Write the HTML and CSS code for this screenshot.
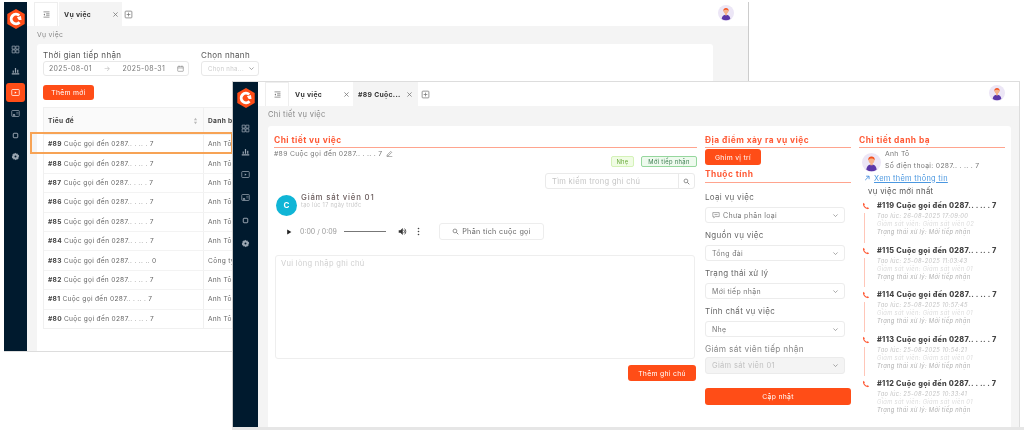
FILE: index.html
```html
<!DOCTYPE html>
<html lang="vi">
<head>
<meta charset="utf-8">
<title>Vụ việc</title>
<link rel="stylesheet" href="styles.css">
</head>
<body>
<svg class="defs" width="0" height="0" aria-hidden="true">
  <symbol id="i-logo" viewBox="0 0 24 24"><path d="M12 1l9.5 5.5v11L12 23l-9.5-5.5v-11z" fill="#ff4d17"/><path d="M15.5 8.2A5.2 5.2 0 1 0 15.8 15.6" fill="none" stroke="#fff" stroke-width="3.2"/><path d="M13 10.2l4.4-1.4.6 4.2-3 .2z" fill="#fff"/></symbol>
  <symbol id="i-dash" viewBox="0 0 12 12"><path d="M1.5 1.5h4v4h-4zM6.5 1.5h4v4h-4zM1.5 6.5h4v4h-4zM6.5 6.5h4v4h-4z" fill="none" stroke="currentColor"/></symbol>
  <symbol id="i-chart" viewBox="0 0 12 12"><path d="M1 10.5h10M3 9V6M6 9V2.5M9 9V5" fill="none" stroke="currentColor" stroke-width="1.6"/></symbol>
  <symbol id="i-case" viewBox="0 0 12 12"><rect x="1" y="2" width="10" height="8" rx="1" fill="none" stroke="currentColor"/><path d="M5 4.5L7.5 6 5 7.5z" fill="currentColor"/></symbol>
  <symbol id="i-card" viewBox="0 0 12 12"><rect x="1" y="2" width="10" height="8" rx="1" fill="none" stroke="currentColor"/><path d="M2.5 8.5c0-2 3-2 3 0zM7 4.5h3M7 6.5h3" fill="currentColor" stroke="currentColor" stroke-width=".7"/></symbol>
  <symbol id="i-square" viewBox="0 0 12 12"><rect x="3" y="3" width="6" height="6" rx="1" fill="none" stroke="currentColor" stroke-width="1.3"/></symbol>
  <symbol id="i-gear" viewBox="0 0 12 12"><path d="M6 1l1 1.3 1.6-.3.6 1.5 1.5.6-.3 1.6L11 6l-1.1 1 .3 1.6-1.5.6-.6 1.5L7 9.7 6 11l-1-1.3-1.6.3-.6-1.5-1.5-.6.3-1.6L1 6l1.1-1-.3-1.6 1.5-.6.6-1.5L5 2.3z" fill="currentColor"/><circle cx="6" cy="6" r="1.3" fill="#001a2e"/></symbol>
  <symbol id="i-menu" viewBox="0 0 12 12"><path d="M2 2.5h8M5.5 5h4.5M5.5 7h4.5M2 9.5h8" fill="none" stroke="currentColor"/><path d="M4 4.5L2 6l2 1.5z" fill="currentColor"/></symbol>
  <symbol id="i-close" viewBox="0 0 10 10"><path d="M2 2l6 6M8 2l-6 6" stroke="currentColor" stroke-width="1.1"/></symbol>
  <symbol id="i-plus" viewBox="0 0 12 12"><rect x="1.5" y="1.5" width="9" height="9" rx="1" fill="none" stroke="currentColor"/><path d="M6 3.5v5M3.5 6h5" stroke="currentColor"/></symbol>
  <symbol id="i-user" viewBox="0 0 24 24"><circle cx="12" cy="12" r="12" fill="#ece6f6"/><path d="M5.5 21c.5-5 3.5-6.500 6.500-6.500s6 1.500 6.500 6.500A12 12 0 0 1 12 23a12 12 0 0 1-6.500-2z" fill="#5b37a8"/><rect x="10.5" y="12" width="3" height="3.5" fill="#f6b48c"/><circle cx="12" cy="9.5" r="3.6" fill="#f6b48c"/><path d="M8 9.5C7.5 5.5 10 4.5 12 4.5s4.5 1 4 5c-1-2-2-2.5-4-2.5s-3 .5-4 2.5z" fill="#f4511e"/></symbol>
  <symbol id="i-cal" viewBox="0 0 10 10"><rect x="1" y="2" width="8" height="7" rx=".8" fill="none" stroke="currentColor" stroke-width=".8"/><path d="M1 4.2h8M3 1v2M7 1v2" stroke="currentColor" stroke-width=".8"/></symbol>
  <symbol id="i-chev" viewBox="0 0 10 10"><path d="M2 3.5l3 3 3-3" fill="none" stroke="currentColor" stroke-width=".9"/></symbol>
  <symbol id="i-sort" viewBox="0 0 6 10"><path d="M3 1l2 3H1zM3 9L1 6h4z" fill="currentColor"/></symbol>
  <symbol id="i-search" viewBox="0 0 10 10"><circle cx="4.2" cy="4.2" r="2.7" fill="none" stroke="currentColor" stroke-width="1.1"/><path d="M6.2 6.2L9 9" stroke="currentColor" stroke-width="1.3"/></symbol>
  <symbol id="i-pen" viewBox="0 0 10 10"><path d="M1.5 7.3L6.8 2l1.4 1.4-5.3 5.3H1.5zM1 9.5h8" fill="none" stroke="currentColor" stroke-width=".9"/></symbol>
  <symbol id="i-phone" viewBox="0 0 10 10"><path d="M2.2 1c-.8.6-1.2 1.4-1 2.4.6 2.8 2.7 4.900 5.400 5.500 1 .2 1.800-.2 2.400-1L7 6.500l-1.200.8C4.600 6.700 3.400 5.400 2.800 4.200L3.600 3z" fill="currentColor"/></symbol>
  <symbol id="i-chat" viewBox="0 0 10 10"><path d="M1 2h8v5H4L2.2 8.5V7H1z" fill="none" stroke="currentColor" stroke-width=".8"/><path d="M3 4.5h4" stroke="currentColor" stroke-width=".8"/></symbol>
  <symbol id="i-play" viewBox="0 0 10 10"><path d="M2 1l7 4-7 4z" fill="currentColor"/></symbol>
  <symbol id="i-vol" viewBox="0 0 10 10"><path d="M.8 3.5h1.900L5.300 1v8L2.700 6.500H.8z" fill="currentColor"/><path d="M6.300 3.200a2.500 2.500 0 0 1 0 3.600M7.300 1.800a4.500 4.500 0 0 1 0 6.400" fill="none" stroke="currentColor" stroke-width=".9"/></symbol>
  <symbol id="i-dots" viewBox="0 0 4 12"><circle cx="2" cy="2" r="1.1" fill="currentColor"/><circle cx="2" cy="6" r="1.1" fill="currentColor"/><circle cx="2" cy="10" r="1.1" fill="currentColor"/></symbol>
  <symbol id="i-arrow" viewBox="0 0 10 10"><path d="M2 8.5L8 2.500M3.500 2h5v5" fill="none" stroke="currentColor" stroke-width="1.3"/></symbol>
</svg>

<main class="desktop">
  <section class="window window-list">
    <nav class="sidebar">
      <svg class="logo"><use href="#i-logo"/></svg>
      <span class="nav-item"><svg><use href="#i-dash"/></svg></span>
      <span class="nav-item"><svg><use href="#i-chart"/></svg></span>
      <span class="nav-item is-active"><svg><use href="#i-case"/></svg></span>
      <span class="nav-item"><svg><use href="#i-card"/></svg></span>
      <span class="nav-item"><svg><use href="#i-square"/></svg></span>
      <span class="nav-item"><svg><use href="#i-gear"/></svg></span>
    </nav>
    <div class="pane">
      <header class="tabbar">
        <span class="tab-toggle"><svg class="ico-9"><use href="#i-menu"/></svg></span>
        <span class="tab is-current"><b>Vụ việc</b><svg class="ico-7"><use href="#i-close"/></svg></span>
        <svg class="ico-9 tab-plus"><use href="#i-plus"/></svg>
        <svg class="user"><use href="#i-user"/></svg>
      </header>
      <p class="crumb">Vụ việc</p>
      <div class="card list-card">
        <div class="filters">
          <div class="filter">
            <label>Thời gian tiếp nhận</label>
            <div class="date-input"><span>2025-08-01</span><i>→</i><span>2025-08-31</span><svg class="ico-7"><use href="#i-cal"/></svg></div>
          </div>
          <div class="filter">
            <label>Chọn nhanh</label>
            <div class="quick-select"><span>Chọn nha...</span><svg class="ico-7"><use href="#i-chev"/></svg></div>
          </div>
        </div>
        <button class="btn btn-add">Thêm mới</button>
        <div class="table">
          <div class="row row-head"><div class="cell cell-title"><b>Tiêu đề</b><svg class="sort"><use href="#i-sort"/></svg></div><div class="cell"><b>Danh bạ</b></div></div>
          <div class="row"><div class="cell cell-title"><b>#89</b> Cuộc gọi đến 0287.. . .. . 7</div><div class="cell">Anh Tô</div></div>
          <div class="row"><div class="cell cell-title"><b>#88</b> Cuộc gọi đến 0287.. . .. . 7</div><div class="cell">Anh Tô</div></div>
          <div class="row"><div class="cell cell-title"><b>#87</b> Cuộc gọi đến 0287.. . .. . 7</div><div class="cell">Anh Tô</div></div>
          <div class="row"><div class="cell cell-title"><b>#86</b> Cuộc gọi đến 0287.. . .. . 7</div><div class="cell">Anh Tô</div></div>
          <div class="row"><div class="cell cell-title"><b>#85</b> Cuộc gọi đến 0287.. . .. . 7</div><div class="cell">Anh Tô</div></div>
          <div class="row"><div class="cell cell-title"><b>#84</b> Cuộc gọi đến 0287.. . .. . 7</div><div class="cell">Anh Tô</div></div>
          <div class="row"><div class="cell cell-title"><b>#83</b> Cuộc gọi đến 0287.. . .. .. 0</div><div class="cell">Công ty</div></div>
          <div class="row"><div class="cell cell-title"><b>#82</b> Cuộc gọi đến 0287.. . .. . 7</div><div class="cell">Anh Tô</div></div>
          <div class="row"><div class="cell cell-title"><b>#81</b> Cuộc gọi đến 0287.. . .. . 7</div><div class="cell">Anh Tô</div></div>
          <div class="row"><div class="cell cell-title"><b>#80</b> Cuộc gọi đến 0287.. . .. . 7</div><div class="cell">Anh Tô</div></div>
        </div>
      </div>
    </div>
  </section>

  <div class="highlight"></div>

  <section class="window window-detail">
    <nav class="sidebar">
      <svg class="logo"><use href="#i-logo"/></svg>
      <span class="nav-item"><svg><use href="#i-dash"/></svg></span>
      <span class="nav-item"><svg><use href="#i-chart"/></svg></span>
      <span class="nav-item"><svg><use href="#i-case"/></svg></span>
      <span class="nav-item"><svg><use href="#i-card"/></svg></span>
      <span class="nav-item"><svg><use href="#i-square"/></svg></span>
      <span class="nav-item"><svg><use href="#i-gear"/></svg></span>
    </nav>
    <div class="pane">
      <header class="tabbar">
        <span class="tab-toggle"><svg class="ico-9"><use href="#i-menu"/></svg></span>
        <span class="tab tab-plain"><b>Vụ việc</b><svg class="ico-7"><use href="#i-close"/></svg></span>
        <span class="tab tab-second is-current"><b>#89 Cuộc...</b><svg class="ico-7"><use href="#i-close"/></svg></span>
        <svg class="ico-9 tab-plus"><use href="#i-plus"/></svg>
        <svg class="user"><use href="#i-user"/></svg>
      </header>
      <p class="crumb">Chi tiết vụ việc</p>
      <div class="card detail-card">
        <div class="col col-main">
          <h2 class="section-title">Chi tiết vụ việc</h2>
          <p class="case-name">#89 Cuộc gọi đến 0287.. . .. . 7 <svg class="ico-7"><use href="#i-pen"/></svg></p>
          <div class="tags"><span class="tag tag-light">Nhẹ</span><span class="tag tag-new">Mới tiếp nhận</span></div>
          <div class="search"><span>Tìm kiếm trong ghi chú</span><em><svg class="ico-7"><use href="#i-search"/></svg></em></div>
          <div class="author">
            <span class="author-avatar">C</span>
            <div><p class="author-name">Giám sát viên 01</p><p class="author-time">tạo lúc 17 ngày trước</p></div>
          </div>
          <div class="audio-row">
            <svg class="ico-7 audio-play"><use href="#i-play"/></svg>
            <span class="audio-time">0:00 / 0:09</span>
            <span class="audio-bar"></span>
            <svg class="ico-9 audio-vol"><use href="#i-vol"/></svg>
            <svg class="audio-dots"><use href="#i-dots"/></svg>
            <button class="btn-outline"><svg class="ico-7"><use href="#i-search"/></svg>Phân tích cuộc gọi</button>
          </div>
          <div class="note-box">Vui lòng nhập ghi chú</div>
          <button class="btn btn-note">Thêm ghi chú</button>
        </div>

        <div class="col col-side">
          <h2 class="section-title">Địa điểm xảy ra vụ việc</h2>
          <button class="btn btn-pin">Ghim vị trí</button>
          <h2 class="section-title section-title-sub">Thuộc tính</h2>
          <div class="field">
            <label>Loại vụ việc</label>
            <div class="select"><span><svg class="ico-8"><use href="#i-chat"/></svg>Chưa phân loại</span><svg class="ico-7"><use href="#i-chev"/></svg></div>
          </div>
          <div class="field">
            <label>Nguồn vụ việc</label>
            <div class="select"><span>Tổng đài</span><svg class="ico-7"><use href="#i-chev"/></svg></div>
          </div>
          <div class="field">
            <label>Trạng thái xử lý</label>
            <div class="select"><span>Mới tiếp nhận</span><svg class="ico-7"><use href="#i-chev"/></svg></div>
          </div>
          <div class="field">
            <label>Tính chất vụ việc</label>
            <div class="select"><span>Nhẹ</span><svg class="ico-7"><use href="#i-chev"/></svg></div>
          </div>
          <div class="field field-disabled">
            <label>Giám sát viên tiếp nhận</label>
            <div class="select"><span>Giám sát viên 01</span><svg class="ico-7"><use href="#i-chev"/></svg></div>
          </div>
          <button class="btn btn-update">Cập nhật</button>
        </div>

        <div class="col col-contact">
          <h2 class="section-title">Chi tiết danh bạ</h2>
          <div class="contact">
            <svg class="contact-avatar"><use href="#i-user"/></svg>
            <div><p class="contact-name">Anh Tô</p><p class="contact-phone">Số điện thoại: 0287.. . .. . 7</p></div>
          </div>
          <p class="contact-link"><svg class="ico-7"><use href="#i-arrow"/></svg><a href="#">Xem thêm thông tin</a></p>
          <p class="latest">vụ việc mới nhất</p>
          <ol class="timeline">
            <li class="event"><span class="event-mark"><svg class="ico-8"><use href="#i-phone"/></svg></span><div><p class="event-title">#119 Cuộc gọi đến 0287.. . .. . 7</p><p class="event-meta">Tạo lúc: 26-08-2025 17:09:00</p><p class="event-meta">Giám sát viên: Giám sát viên 02</p><p class="event-meta event-meta-dark">Trạng thái xử lý: Mới tiếp nhận</p></div></li>
            <li class="event"><span class="event-mark"><svg class="ico-8"><use href="#i-phone"/></svg></span><div><p class="event-title">#115 Cuộc gọi đến 0287.. . .. . 7</p><p class="event-meta">Tạo lúc: 25-08-2025 11:03:43</p><p class="event-meta">Giám sát viên: Giám sát viên 01</p><p class="event-meta event-meta-dark">Trạng thái xử lý: Mới tiếp nhận</p></div></li>
            <li class="event"><span class="event-mark"><svg class="ico-8"><use href="#i-phone"/></svg></span><div><p class="event-title">#114 Cuộc gọi đến 0287.. . .. . 7</p><p class="event-meta">Tạo lúc: 25-08-2025 10:57:45</p><p class="event-meta">Giám sát viên: Giám sát viên 01</p><p class="event-meta event-meta-dark">Trạng thái xử lý: Mới tiếp nhận</p></div></li>
            <li class="event"><span class="event-mark"><svg class="ico-8"><use href="#i-phone"/></svg></span><div><p class="event-title">#113 Cuộc gọi đến 0287.. . .. . 7</p><p class="event-meta">Tạo lúc: 25-08-2025 10:54:21</p><p class="event-meta">Giám sát viên: Giám sát viên 01</p><p class="event-meta event-meta-dark">Trạng thái xử lý: Mới tiếp nhận</p></div></li>
            <li class="event event-last"><span class="event-mark"><svg class="ico-8"><use href="#i-phone"/></svg></span><div><p class="event-title">#112 Cuộc gọi đến 0287.. . .. . 7</p><p class="event-meta">Tạo lúc: 25-08-2025 10:33:41</p><p class="event-meta">Giám sát viên: Giám sát viên 01</p><p class="event-meta event-meta-dark">Trạng thái xử lý: Mới tiếp nhận</p></div></li>
          </ol>
        </div>
      </div>
    </div>
  </section>
</main>
</body>
</html>
```

FILE: styles.css
```css
* { box-sizing: border-box; }
html, body { margin: 0; height: 100%; background: #fff; overflow: hidden; }
body { font-family: Inter, "Liberation Sans", sans-serif; font-size: 7px; color: #555; letter-spacing: .32px; }
p, h2, ol { margin: 0; padding: 0; }
ol { list-style: none; }
button { font: inherit; letter-spacing: inherit; border: 0; cursor: pointer; }
.defs { position: absolute; }
.desktop { position: relative; width: 1024px; height: 432px; overflow: hidden; }

/* Free-floating windows on the collage canvas */
.window { position: absolute; display: flex; overflow: hidden; background: #f4f4f4; filter: blur(.45px); }
.window-list { left: 4px; top: 2px; width: 745px; height: 350px; border-right: 1px solid #ccc; border-bottom: 1px solid #ddd; }
.window-detail { left: 232px; top: 81px; width: 788px; height: 346px; border-top: 1px solid #ddd; border-left: 1px solid #ccc; border-right: 1px solid #ddd; z-index: 2; }
.desktop::after { content: ""; position: absolute; left: 232px; top: 427px; width: 792px; height: 3px; background: #e6e6e6; }
.highlight { position: absolute; left: 30px; top: 132px; width: 203px; height: 22px; border: 2px solid #f7a355; z-index: 1; filter: blur(.3px); }

.sidebar { flex: none; width: 23px; background: #001a2e; color: #9aa6b2; display: flex; flex-direction: column; align-items: center; }
.window-detail .sidebar { width: 25px; }
.logo { width: 22px; height: 22px; margin: 6px 0 9.5px; flex: none; }
.nav-item { width: 19px; height: 19px; margin-bottom: 2.6px; display: flex; align-items: center; justify-content: center; border-radius: 3px; flex: none; }
.nav-item svg { width: 9px; height: 9px; }
.nav-item.is-active { background: #ff4d17; color: #fff; }
.window-detail .logo { margin: 5px 0 10px; }
.window-detail .nav-item { margin-bottom: 4px; }

.pane { flex: 1; min-width: 0; display: flex; flex-direction: column; }
.tabbar { flex: none; height: 24px; background: #fff; display: flex; align-items: stretch; padding-left: 7px; position: relative; }
.tab-toggle { width: 24px; display: flex; align-items: center; justify-content: center; color: #777; border: 1px solid #eee; background: #fff; border-bottom: 0; }
.tab { width: 63px; margin-left: 1px; display: flex; align-items: center; justify-content: space-between; padding: 0 3px 0 5px; color: #333; background: #fff; }
.tab b { font-weight: 700; color: #333; font-size: 6.8px; }
.tab.is-current { background: #f4f4f4; }
.tab-second { width: 65px; margin-left: 0; padding: 0 5px; }
.tab-plus { align-self: center; margin-left: 3px; color: #777; }
.window-list .tab-plus { margin-left: 2px; }
.user { width: 16px; height: 16px; position: absolute; right: 14px; top: 3px; }
.ico-7 { width: 7px; height: 7px; flex: none; color: #777; }
.ico-8 { width: 8px; height: 8px; flex: none; }
.ico-9 { width: 9px; height: 9px; flex: none; }

.crumb { flex: none; height: 20px; line-height: 18px; padding-left: 10px; color: #888; font-size: 7.5px; }
.window-list .crumb { height: 18px; line-height: 18px; font-size: 6.8px; }
.card { flex: 1; background: #fff; min-height: 0; border-radius: 3px 3px 0 0; }
.list-card { margin: 0 35px 0 10px; padding: 6px 6px 0; }
.detail-card { margin: 0 8px 0 10px; padding: 8px 6px 0; display: flex; gap: 8px; }

/* List window */
.filters { display: flex; gap: 12px; }
.filter label { display: block; height: 11px; line-height: 11px; font-size: 8px; color: #555; }
.date-input, .quick-select { height: 15px; border: 1px solid #e8e8e8; border-radius: 3px; display: flex; align-items: center; font-size: 7px; }
.date-input { width: 146px; padding: 0 4px 0 5px; justify-content: space-between; color: #777; }
.date-input i { font-style: normal; color: #bbb; }
.quick-select { width: 58px; padding: 0 3px 0 6px; justify-content: space-between; color: #ccc; font-size: 6px; }
.btn { background: #ff4d17; color: #fff; border-radius: 3px; display: flex; align-items: center; justify-content: center; font-size: 6.8px; }
.btn-add { width: 51px; height: 15px; margin: 9px 0 7px; }
.table { border: 1px solid #f0f0f0; }
.row { display: flex; height: 19.4px; border-top: 1px solid #f3f3f3; align-items: stretch; }
.row-head { height: 26px; background: #fafafa; border-top: 0; color: #333; }
.cell { padding-left: 4px; display: flex; align-items: center; gap: 2px; white-space: nowrap; color: #666; font-size: 6.6px; }
.cell b { font-weight: 700; color: #444; }
.cell-title { width: 160px; flex: none; border-right: 1px solid #f0f0f0; }
.sort { width: 5px; height: 8px; color: #bbb; margin-left: auto; margin-right: 5px; }

/* Detail window */
.col { display: flex; flex-direction: column; min-width: 0; }
.col-main { width: 423px; flex: none; }
.col-side, .col-contact { width: 146px; flex: none; }
.section-title { height: 14px; line-height: 12px; font-size: 8.4px; font-weight: 700; color: #ff5a36; border-bottom: 1px solid #ffa48e; flex: none; letter-spacing: .45px; }
.section-title-sub { height: 17px; line-height: 16px; margin-top: 1px; }
.case-name { height: 9px; line-height: 9px; margin-top: 1px; color: #777; display: flex; gap: 4px; align-items: center; font-size: 6.8px; }
.tags { display: flex; justify-content: flex-end; gap: 7px; height: 11px; margin-top: -2px; }
.tag { height: 11px; line-height: 9px; border-radius: 2px; font-size: 5.8px; }
.tag-light { width: 23px; text-align: center; background: #f0fce4; border: 1px solid #d4f2b8; color: #68a93a; }
.tag-new { width: 56px; text-align: center; background: #eefaee; border: 1px solid #96d79d; color: #3c7d50; }
.search { align-self: flex-end; width: 150px; height: 16px; margin: 6px 2px 0 0; border: 1px solid #eaeaea; border-radius: 3px; display: flex; align-items: center; justify-content: space-between; padding-left: 6px; color: #c4c4c4; font-size: 7.5px; }
.search em { width: 16px; height: 100%; border-left: 1px solid #eaeaea; display: flex; align-items: center; justify-content: center; font-style: normal; }
.author { display: flex; align-items: center; gap: 4px; height: 22px; margin: 5px 0 0 2px; }
.author-avatar { width: 21px; height: 21px; border-radius: 50%; background: #10b5d6; color: #fff; font-weight: 700; font-size: 8px; display: flex; align-items: center; justify-content: center; flex: none; }
.author-name { font-size: 7.8px; color: #6b5d5d; line-height: 9px; letter-spacing: .8px; font-weight: 500; margin-top: -8px; }
.author-time { font-size: 5.5px; line-height: 7px; color: #c8c8c8; }
.audio-row { display: flex; align-items: center; height: 17px; margin-top: 7px; padding-left: 12px; }
.audio-play { color: #222; width: 6px; height: 6px; }
.audio-time { font-size: 7px; color: #999; margin-left: 8px; letter-spacing: 0; width: 36px; white-space: nowrap; }
.audio-bar { width: 42px; height: 1.5px; background: #777; margin-left: 8px; }
.audio-vol { color: #333; margin-left: 12px; }
.audio-dots { width: 3px; height: 9px; margin-left: 10px; color: #444; }
.btn-outline { margin-left: 19px; width: 105px; height: 17px; background: #fff; border: 1px solid #ededed; border-radius: 3px; color: #666; display: flex; align-items: center; justify-content: center; gap: 3px; font-size: 7.2px; }
.note-box { margin: 15px 2px 0 1px; height: 104px; border: 1px solid #eeeeee; border-radius: 3px; padding: 3px 5px; color: #cfcfcf; font-size: 7.5px; }
.btn-note { align-self: flex-end; margin: 6px 1px 0 0; width: 68px; height: 16px; }
.btn-pin { width: 56px; height: 16px; margin-top: 1px; flex: none; }
.field { display: flex; flex-direction: column; margin-bottom: 4px; flex: none; }
.section-title-sub + .field { margin-top: 6px; }
.field label { height: 16px; line-height: 16px; margin-bottom: 2px; font-size: 8px; color: #666; }
.select { width: 140px; height: 16px; border: 1px solid #ececec; border-radius: 3px; display: flex; align-items: center; justify-content: space-between; padding: 0 5px 0 6px; color: #777; font-size: 7px; }
.select span { display: flex; align-items: center; gap: 3px; }
.field-disabled { margin-top: 2px; margin-bottom: 0; }
.field-disabled label { height: 12px; line-height: 12px; margin-bottom: 2px; color: #888; font-size: 8.3px; }
.field-disabled .select { height: 17px; background: #f4f4f4; border-color: #ebebeb; color: #c0c0c0; font-size: 7.5px; }
.btn-update { height: 17px; margin-top: 14px; flex: none; }

.contact { display: flex; gap: 4px; height: 22px; padding-left: 3px; flex: none; }
.contact-avatar { width: 19px; height: 19px; margin-top: 5px; flex: none; }
.contact-name { line-height: 9px; margin-top: 1px; color: #777; font-size: 6.8px; }
.contact-phone { line-height: 9px; margin-top: 3px; color: #777; font-size: 6.8px; white-space: nowrap; }
.contact-link { display: flex; align-items: center; gap: 4px; height: 10px; margin: 3px 0 0 5px; flex: none; }
.contact-link svg { color: #2f80d8; width: 6px; height: 6px; }
.contact-link a { color: #4a97e0; font-size: 7.4px; }
.latest { height: 10px; line-height: 10px; margin: 3px 0 0 9px; color: #555; font-size: 7.8px; flex: none; }
.timeline { margin-top: 5px; }
.event { display: flex; height: 44.5px; gap: 7px; padding-left: 3px; }
.event-mark { width: 8px; flex: none; display: flex; flex-direction: column; align-items: center; color: #ff5a36; padding-top: 1px; }
.event-mark::after { content: ""; width: 1px; flex: 1; background: #ffc6b8; margin: 3px 3px 3px 0; }
.event-last .event-mark::after { display: none; }
.event-title { font-size: 7.3px; line-height: 10px; font-weight: 800; color: #444; margin-bottom: 1px; white-space: nowrap; }
.event-meta { font-size: 5.8px; line-height: 8px; color: #dcdcdc; font-style: italic; white-space: nowrap; }
.event-meta:nth-of-type(2) { color: #c4c4c4; }
.event-meta-dark { color: #b0b0b0; }
```
